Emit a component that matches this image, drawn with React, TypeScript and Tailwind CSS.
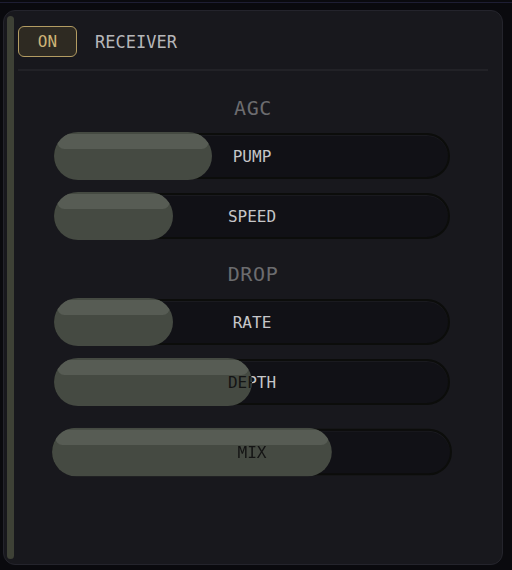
import React from "react";

const mono = { fontFamily: '"DejaVu Sans Mono", "Liberation Mono", monospace' };

type SliderProps = { label: string; pct: number; className?: string };

function Slider({ label, pct, className = "" }: SliderProps) {
  return (
    <div className={`relative ml-[36px] h-[46px] w-[396px] ${className}`}>
      <div className="absolute inset-0 rounded-full border-2 border-[#0c0d0b] bg-[#111116] shadow-[inset_0_1px_0_rgba(255,255,255,0.04)]" />
      <div className="absolute inset-0 flex items-center justify-center pt-[1px] text-[16px] text-[#c6c6c8]">
        {label}
      </div>
      <div
        className="absolute left-0 top-[-1px] bottom-[-1px] overflow-hidden rounded-full bg-[#454a42]"
        style={{ width: `${pct}%` }}
      >
        <div className="absolute left-[3px] right-[3px] top-[2px] h-[15px] rounded-full bg-[#575c54]" />
        <div className="absolute left-0 top-[1px] flex h-[46px] w-[396px] items-center justify-center pt-[1px] text-[16px] text-[#141414]">
          {label}
        </div>
      </div>
    </div>
  );
}

export default function App() {
  return (
    <div className="h-[570px] w-[512px] overflow-hidden bg-[#0a0a0e]" style={mono}>
      <div className="pt-[2px]">
        <div className="h-[1px] bg-[#1e1e33]" />
      </div>
      <div className="ml-[3px] mr-[9px] mt-[7px] flex h-[555px] rounded-[12px] border border-[#24242c] bg-[#18181d]">
        <div className="ml-[3px] mt-[5px] mb-[5px] w-[7px] rounded-full bg-[#3e4136]" />
        <div className="flex flex-1 flex-col pl-[4px] pr-[14px] pt-[15px]">
          <div className="flex h-[31px] items-center">
            <div className="flex h-[31px] w-[59px] items-center justify-center rounded-[6px] border-[1.5px] border-[#b39c62] bg-[#2e2a22] text-[16px] text-[#cdb477]">
              ON
            </div>
            <div className="ml-[18px] pt-[2px] text-[17px] text-[#b6b6b9]">RECEIVER</div>
          </div>
          <div className="mt-[12px] h-[2px] bg-[#222227]" />
          <div className="mt-[25px] h-[24px] text-center text-[20px] leading-[24px] tracking-[0.03em] text-[#6c6c6f]">
            AGC
          </div>
          <div className="mt-[13px]">
            <Slider label="PUMP" pct={40} />
          </div>
          <div className="mt-[14px]">
            <Slider label="SPEED" pct={30} />
          </div>
          <div className="mt-[23px] h-[24px] text-center text-[20px] leading-[24px] tracking-[0.03em] text-[#6c6c6f]">
            DROP
          </div>
          <div className="mt-[13px]">
            <Slider label="RATE" pct={30} />
          </div>
          <div className="mt-[14px]">
            <Slider label="DEPTH" pct={50} />
          </div>
          <div className="mt-[24px]">
            <Slider label="MIX" pct={70} className="scale-[1.01]" />
          </div>
        </div>
      </div>
    </div>
  );
}
